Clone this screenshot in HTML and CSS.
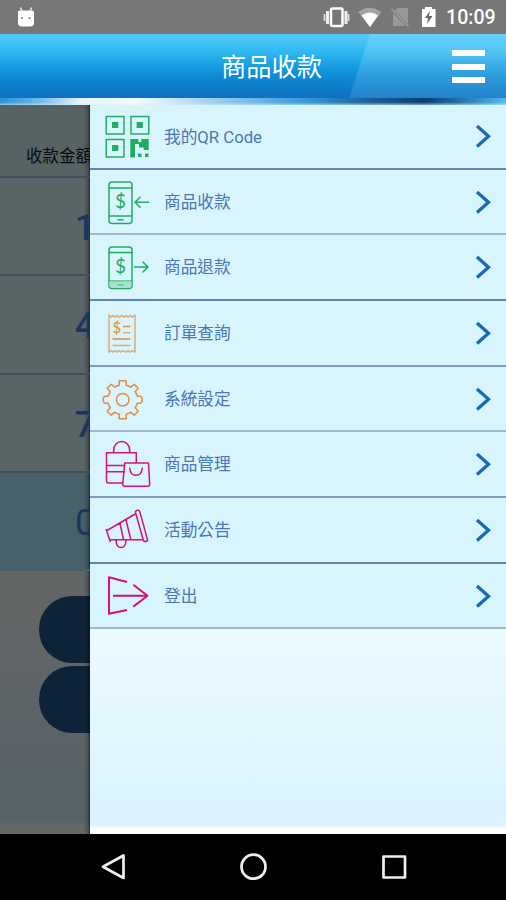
FILE: index.html
```html
<!DOCTYPE html>
<html lang="zh-Hant">
<head>
<meta charset="utf-8">
<title>商品收款</title>
<link rel="stylesheet" href="styles.css">
</head>
<body>
<div class="screen">
  <div class="status">
    <svg class="droid" width="20" height="24" viewBox="16 4 20 24"><path d="M18 11Q18 9.500 20 9.500H32Q34 9.500 34 11V22Q34 25.500 30 25.500H22Q18 25.500 18 22Z" fill="#fff"/><path d="M20.500 6.500l1.500 4M31.500 6.500l-1.500 4" stroke="#e8e8e8" stroke-width="1.500"/><circle cx="22" cy="17" r="1" fill="#777"/><circle cx="29.500" cy="17" r="1" fill="#777"/></svg>
    <svg width="120" height="34" viewBox="320 0 120 34">
      <rect x="331" y="8.500" width="11.500" height="17.500" rx="1.500" fill="none" stroke="#fff" stroke-width="2.500"/>
      <path d="M327.500 11v13M346 11v13" stroke="#eee" stroke-width="3"/><path d="M324.500 14v7M348.500 14v7" stroke="#ddd" stroke-width="1.800"/>
      <path d="M358 12Q369.500 3.500 381.500 12L370 27Z" fill="#a2a2a2"/><path d="M361.500 15.500Q370 9.500 378 15.500L370 27Z" fill="#fff"/>
      <path d="M397 8H408V26H393V13Z" fill="#989898"/><path d="M391 9L409 27" stroke="#777" stroke-width="3"/><path d="M391.500 9L408.500 26.500" stroke="#9d9d9d" stroke-width="1.500"/>
      <path d="M422 9h3V7h7v2h3.500v18H422Z" fill="#fff"/><path d="M430 11l-5 7h3l-1 6 5.500-8h-3.500z" fill="#666"/>
    </svg>
    <span class="clock">10:09</span>
  </div>
  <header class="header">
    <h1>商品收款</h1>
    <button class="burger" aria-label="menu"><i></i><i></i><i></i></button>
  </header>
  <div class="glow"></div>
  <main class="main">
    <section class="page">
      <div class="amount">收款金額</div>
      <div class="key">1</div>
      <div class="key">4</div>
      <div class="key">7</div>
      <div class="key zero">0</div>
      <div class="actions"><div class="pill"></div><div class="pill"></div></div>
    </section>
    <nav class="menu">
      <a class="item first"><svg class="icon green" viewBox="90 105 74 62"><rect x="106.200" y="116.500" width="17.800" height="17.500"/><rect x="131" y="116.500" width="17.800" height="17.500"/><rect x="106.200" y="139.500" width="17.800" height="17.500"/><path class="solid" d="M112 122h6.300v6H112zM136.600 122h6.300v6h-6.300zM112 145h6.300v6H112zM130.300 139h8v3h3v-3h7.400v11h-5v-2.500H139v-3.500h-4v13.500h-4.700zM138 153.500h3.500v3.500H138zM145 153.500h3.500v3.500H145z"/></svg><span>我的QR Code</span><svg class="chev" viewBox="474 105 18 62"><path d="M477 126l11.500 10.200L477 146.400"/></svg></a>
      <a class="item"><svg class="icon green" viewBox="90 169.500 74 63.700"><rect x="109" y="181.500" width="23" height="41.500" rx="3"/><path d="M109 187.500h23M109 215.500h23M118 219.300h5M148.500 201.700H135.500M140 196.700l-5 5 5 5"/><text x="120.400" y="208">$</text></svg><span>商品收款</span><svg class="chev" viewBox="474 105 18 63.700"><path d="M477 127l11.500 10.200L477 147.400"/></svg></a>
      <a class="item"><svg class="icon green" viewBox="90 235.200 74 63.700"><rect x="109" y="247.200" width="23" height="41.500" rx="3"/><path class="pale" d="M109.500 281h22v5q0 2-3 2h-16q-3 0-3-2z"/><path d="M109 252.800h23M134.500 267.200H148M143 262.200l5 5-5 5"/><path class="faint" d="M109 281h23M118 285h5"/><text x="120.400" y="273.700">$</text></svg><span>商品退款</span><svg class="chev" viewBox="474 105 18 63.700"><path d="M477 127l11.500 10.200L477 147.400"/></svg></a>
      <a class="item"><svg class="icon orange" viewBox="90 300.900 74 63.700"><path class="soft" d="M109 315l2 2 2-1.500 2 1.500 2-1.500 2 1.500 2.500-1.500 2.500 1.500 2-1.500 2 1.500 2-1.500 2 1.500 3-2V352l-3-1.500-2 1.500-2-1.500-2 1.500-2.500-1.500-2.500 1.500-2-1.500-2 1.500-2-1.500-2 1.500-2-1.500-2 1.500z"/><path d="M123.500 326.500h6.500M113 338.800h17"/><path class="soft" d="M123.500 332.700h6.500M113 345.400h17"/><text class="small" x="116.800" y="333">$</text></svg><span>訂單查詢</span><svg class="chev" viewBox="474 105 18 63.700"><path d="M477 127l11.500 10.200L477 147.400"/></svg></a>
      <a class="item"><svg class="icon orange" viewBox="90 366.600 74 63.700"><g transform="translate(122.700 399.300)"><circle r="6.300"/><path d="M-3.500-19H3.500V-14.500Q6-14 8-12.500L11.500-15.500L15.500-11.500L12.500-8Q14-6 14.500-3.500H17.500Q19.500-3 19.500 0Q19.500 3 17.500 3.500H14.500Q14 6 12.500 8L15.500 11.500L11.500 15.500L8 12.500Q6 14 3.500 14.500V19H-3.500V14.500Q-6 14-8 12.500L-11.500 15.500L-15.500 11.500L-12.500 8Q-14 6-14.500 3.500H-17.500Q-19.500 3-19.500 0Q-19.500-3-17.500-3.500H-14.500Q-14-6-12.500-8L-15.500-11.500L-11.500-15.500L-8-12.500Q-6-14-3.500-14.500Z"/></g></svg><span>系統設定</span><svg class="chev" viewBox="474 105 18 63.700"><path d="M477 127l11.500 10.200L477 147.400"/></svg></a>
      <a class="item"><svg class="icon pink" viewBox="90 432.300 74 63.700"><path d="M123 483.300H108.500Q106.500 483.300 106.500 481V453H136.300V463M106.500 465.700h18M106.500 472h18M113.700 453v-2.500a8 8.700 0 0 1 16 0v2.500M124.700 463.300h23.800l1.200 21.200q0 2-2 2h-23q-2 0-2-2zM129.800 468.500q.5 7 6.200 7t6.200-7"/></svg><span>商品管理</span><svg class="chev" viewBox="474 105 18 63.700"><path d="M477 127l11.500 10.200L477 147.400"/></svg></a>
      <a class="item"><svg class="icon pink" viewBox="90 498 74 63.700"><path d="M106.200 529.500l4 12M107 530.500L136 513.500M109.500 539.700H143M120 523.500l3.500 16M126 520l4.800 19.500M135.500 512.500q-.3-1.700 1.800-2.200 2-.4 2.500 1.300l7.700 28q.3 1.500-1.500 1.900-2.200.5-2.700-1.200zM116 540.500q.3 7 5 7t5-7"/></svg><span>活動公告</span><svg class="chev" viewBox="474 105 18 63.700"><path d="M477 127l11.500 10.200L477 147.400"/></svg></a>
      <a class="item"><svg class="icon pink" viewBox="90 563.700 74 63.700"><path class="bold" d="M127 581.700L109 577V613.500L127 609.700M113 595.400H147M133.300 584.500L147.500 595.400L133.300 606.300"/></svg><span>登出</span><svg class="chev" viewBox="474 105 18 63.700"><path d="M477 127l11.500 10.200L477 147.400"/></svg></a>
      <div class="rest"></div>
    </nav>
  </main>
  <footer class="nav">
    <svg width="506" height="66" viewBox="0 834 506 66"><path d="M123.500 855.500v22.500L103 866.800zM383.500 856.500h21.500v21H383.500z"/><circle cx="253.500" cy="866.700" r="12"/></svg>
  </footer>
</div>
</body>
</html>
```
FILE: styles.css
```css
* { box-sizing: border-box; }
body { margin: 0; background: #000; font-family: Roboto, "Noto Sans CJK TC", sans-serif; }
.screen { width: 506px; height: 900px; display: flex; flex-direction: column; overflow: hidden; }
.status { height: 34px; flex: none; background: #777; display: flex; align-items: center; padding: 0 10px 0 16px; }
.status .droid { margin-right: 284px; flex: none; }
.status svg { flex: none; display: block; }
.clock { color: #fff; font-size: 19.600px; font-weight: 500; line-height: 34px; margin-left: 6px; padding-top: 2px; white-space: nowrap; }
.header {
  height: 64px; flex: none; display: grid; grid-template-columns: 1fr auto 1fr; align-items: center; padding: 0 21px 0 58px;
  background: linear-gradient(#52cbf8, #2db6ef 30%, #129be0 55%, #0b70c0);
  background: linear-gradient(transparent 30%, rgba(11, 112, 192, .5)), linear-gradient(108deg, transparent 70%, rgba(150, 225, 255, .3) 70.500%, rgba(150, 225, 255, .3) 100%), linear-gradient(#52cbf8, #2db6ef 30%, #129be0 60%, #0c74c4);
}
.header h1 { grid-column: 2; margin: 0 -22px; color: #fff; font-size: 25.300px; font-weight: 400; line-height: 60px; padding: 4px 0 0; }
.burger { grid-column: 3; justify-self: end; width: 33px; padding: 0; border: 0; background: none; display: flex; flex-direction: column; gap: 7.500px; margin-top: 1px; }
.burger i { height: 6px; background: #fff; }
.glow { height: 7px; flex: none; background: linear-gradient(transparent 60%, rgba(216, 245, 255, .55)), linear-gradient(90deg, #2b8fd8, #75b9e8 8%, #e8f4fc 16%, #f4fbff 27%, #a9d5f2 40%, #3496d9 61%, #1c639e 72%, #0a3f70 84%, #3289c5 94%, #58b8ec); }
.main { height: 729px; flex: none; display: flex; }
.page { width: 90px; overflow: hidden; background: linear-gradient(90deg, transparent 84px, rgba(0, 0, 0, .28) 89px, #111 90px), linear-gradient(#626566 466px, #626566 520px, #556268 715px, #666 722px); }
.amount { height: 73px; padding: 40px 0 0 26px; font-size: 16.500px; line-height: 24px; white-space: nowrap; color: #080c0f; border-bottom: 2px solid #3f4e5d; background: linear-gradient(90deg, transparent 84px, rgba(0, 0, 0, .28) 89px, #111 90px), #566264; }
.key { height: 98.300px; width: 168px; padding-left: 2px; text-align: center; font-size: 36px; font-weight: 500; line-height: 101px; color: #1b355e; border-bottom: 2px solid #3f4e5d; background: linear-gradient(90deg, transparent 84px, rgba(0, 0, 0, .28) 89px, #111 90px), #586465; }
.zero { border-bottom-color: #48606a; font-weight: 400; background: linear-gradient(90deg, transparent 84px, rgba(0, 0, 0, .28) 89px, #111 90px), #48606a; }
.actions { padding: 25px 0 0 38.500px; display: flex; flex-direction: column; gap: 3px; }
.pill { width: 250px; height: 67px; border-radius: 33px; background: linear-gradient(90deg, transparent 46px, #071422 51.500px), #0f2338; }
.menu { flex: 1; display: flex; flex-direction: column; background: #d8f5fe; }
.item { height: 65.700px; flex: none; display: flex; align-items: flex-start; border-bottom: 2px solid #7f9bbd; color: #4a76b2; font-size: 16.700px; }
.first { height: 64.500px; }
.item:nth-child(odd) { border-bottom-color: #6085b1; }
.item:nth-child(2), .item:nth-child(5), .item:nth-child(8) { border-bottom-color: #a3b6cf; }
.item span { flex: 1; line-height: 64px; padding-top: 1px; white-space: nowrap; }
.icon { width: 74px; height: 63.700px; fill: none; stroke: currentColor; stroke-width: 1.500; flex: none; stroke-linejoin: round; stroke-linecap: round; }
.first .icon, .first .chev { height: 62px; }
.icon text { fill: currentColor; stroke: none; font: 19px Lato, sans-serif; text-anchor: middle; }
.icon .small { font-size: 15px; }
.green { color: #20ad61; }
.orange { color: #e58b3f; }
.pink { color: #d3127a; }
.icon .solid { fill: currentColor; stroke: none; }
.icon .pale { fill: #a9e2d0; stroke: none; }
.icon .faint { opacity: .55; }
.icon .soft { opacity: .7; }
.icon .bold { stroke-width: 2; stroke-linecap: butt; }
.chev { width: 18px; height: 63.700px; flex: none; margin-right: 14px; fill: none; stroke: #1b68b3; stroke-width: 3.300; }
.rest { flex: 1; background: linear-gradient(#ecfaff, #daf3fe 194px, #daf3fe 196px, #fff 200px); }
.nav { height: 66px; flex: none; background: #000; }
.nav svg { display: block; fill: none; stroke: #efefef; stroke-width: 2.700; stroke-linejoin: round; }
```
